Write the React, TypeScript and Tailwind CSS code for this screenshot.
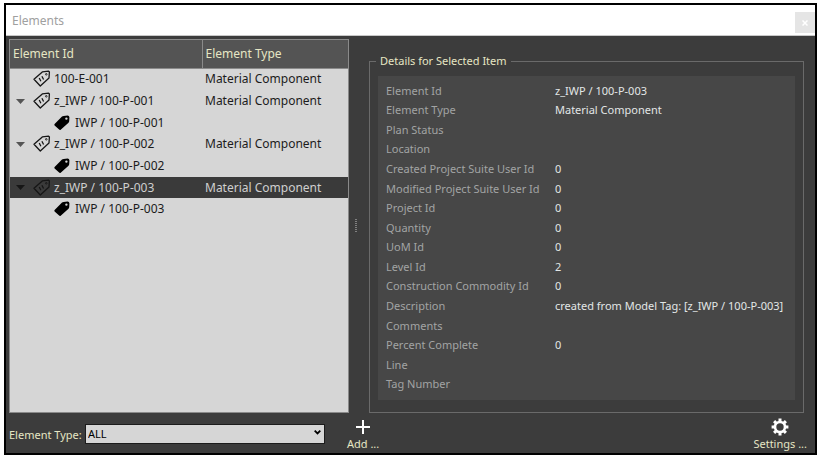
import { useState } from 'react';

type Row = { id: string; type?: string; child?: boolean; expandable?: boolean };

const rows: Row[] = [
  { id: '100-E-001', type: 'Material Component' },
  { id: 'z_IWP / 100-P-001', type: 'Material Component', expandable: true },
  { id: 'IWP / 100-P-001', child: true },
  { id: 'z_IWP / 100-P-002', type: 'Material Component', expandable: true },
  { id: 'IWP / 100-P-002', child: true },
  { id: 'z_IWP / 100-P-003', type: 'Material Component', expandable: true },
  { id: 'IWP / 100-P-003', child: true },
];

const details: [string, string][] = [
  ['Element Id', 'z_IWP / 100-P-003'],
  ['Element Type', 'Material Component'],
  ['Plan Status', ''],
  ['Location', ''],
  ['Created Project Suite User Id', '0'],
  ['Modified Project Suite User Id', '0'],
  ['Project Id', '0'],
  ['Quantity', '0'],
  ['UoM Id', '0'],
  ['Level Id', '2'],
  ['Construction Commodity Id', '0'],
  ['Description', 'created from Model Tag: [z_IWP / 100-P-003]'],
  ['Comments', ''],
  ['Percent Complete', '0'],
  ['Line', ''],
  ['Tag Number', ''],
];

function OutlineTag() {
  return (
    <svg width="18" height="18" viewBox="0 0 18 18" fill="none" stroke="currentColor" aria-hidden="true">
      <path d="M1 9.3 9.3 1.9 15.6 1.2 16.4 2 16 8 7.3 16Z" strokeWidth="1.3" strokeLinejoin="round" />
      <circle cx="13.3" cy="4.300" r=".8" strokeWidth=".9" />
      <path d="m6.200 8 1.700 3.200M8.900 6.300l1.700 3.200" strokeWidth="1.3" />
    </svg>
  );
}

function SolidTag() {
  return (
    <svg width="16" height="16" viewBox="0 0 16 16" aria-hidden="true">
      <path
        d="M.6 9.1 8 1.6Q8.7 1 9.6.9L13.6.6Q15.3.6 15.4 2.2L15.2 6.3Q15.1 7.1 14.5 7.7L6.7 14.7Q5.9 15.4 5.1 14.6L.6 10.5Q0 9.8.6 9.1ZM12.4 2.4a1.2 1.2 0 1 0 0 2.4 1.2 1.2 0 0 0 0-2.4Z"
        fill="currentColor"
        fillRule="evenodd"
      />
    </svg>
  );
}

function Gear() {
  return (
    <svg width="18" height="18" viewBox="0 0 18 18" fill="none" stroke="currentColor" aria-hidden="true">
      <circle cx="9" cy="9" r="5" strokeWidth="2.6" />
      <path
        d="M9 .6v3M9 14.4v3M.6 9h3M14.4 9h3M3.1 3.1l2 2M12.9 12.9l2 2M3.1 14.9l2-2M12.9 5.1l2-2"
        strokeWidth="3"
      />
    </svg>
  );
}

export default function App() {
  const [selected, setSelected] = useState(5);
  return (
    <div className="h-screen bg-white pt-[3px] pr-[5px] pb-[2px] pl-1 font-['Noto_Sans',sans-serif]">
      <main className="flex h-full flex-col border-2 border-black bg-[#3c3c3c]">
        <header className="flex h-[31px] shrink-0 items-center justify-between border-b border-[#c8c8c8] bg-white pt-[2px] pl-[6px]">
          <h1 className="text-[12px] leading-4 text-[#a0a0a0]">Elements</h1>
          <button aria-label="Close" className="mt-[3px] flex h-[21px] w-5 items-center justify-center bg-[#e5e5e5] text-white">
            <svg width="6" height="6" viewBox="0 0 6 6" stroke="currentColor" strokeWidth="1.5" aria-hidden="true">
              <path d="m.5.5 5 5m0-5-5 5" />
            </svg>
          </button>
        </header>

        <div className="flex min-h-0 flex-1 pt-[3px] pr-[11px] pl-[3px]">
          <section className="w-[340px] shrink-0 border border-[#8a8a8a] bg-[#d6d6d6]">
            <table className="h-[180px] w-full table-fixed border-collapse text-left text-[12px] leading-4 text-[#1c1c1c]">
              <thead>
                <tr className="h-7 border-b border-[#8a8a8a] bg-[#545454] text-[#e6e6c4]">
                  <th className="w-[192px] border-r border-[#8a8a8a] p-0 pl-[3px] font-normal">Element Id</th>
                  <th className="p-0 pl-[3px] font-normal">Element Type</th>
                </tr>
              </thead>
              <tbody>
                {rows.map((row, i) => (
                  <tr
                    key={row.id}
                    onClick={() => setSelected(i)}
                    className={i === selected ? 'bg-[#3a3a3a]' : ''}
                  >
                    <td className="p-0">
                      <div className={row.child ? 'flex h-[18px] items-center pl-11' : 'flex h-[18px] items-center pl-[6px]'}>
                        {!row.child && (
                          <span className={i === selected ? 'flex w-[17px] text-[#161616]' : 'flex w-[17px] text-[#555555]'}>
                            {row.expandable && (
                              <svg width="9" height="5" viewBox="0 0 9 5" fill="currentColor" aria-hidden="true">
                                <path d="M0 0h9L4.500 5Z" />
                              </svg>
                            )}
                          </span>
                        )}
                        <span className={row.child ? 'w-[21px] text-black' : 'w-[21px] text-[#161616]'}>
                          {row.child ? <SolidTag /> : <OutlineTag />}
                        </span>
                        <span className={i === selected ? 'text-[#cfcfcf]' : ''}>{row.id}</span>
                      </div>
                    </td>
                    <td className={i === selected ? 'p-0 pl-[3px] text-[#cfcfcf]' : 'p-0 pl-[3px]'}>{row.type}</td>
                  </tr>
                ))}
              </tbody>
            </table>
          </section>

          <div className="flex w-5 shrink-0 items-center justify-center pr-[6px]" role="separator">
            <svg width="2" height="14" viewBox="0 0 2 14" aria-hidden="true">
              <path d="M1 0v14" stroke="#808080" strokeWidth="2" strokeDasharray="1 1" />
            </svg>
          </div>

          <fieldset className="mt-[14px] min-w-0 flex-1 border border-[#6a6a6a] px-2 pb-[11px]">
            <legend className="ml-[-2px] px-1 text-[11px] leading-4 text-[#e6e6c4]">Details for Selected Item</legend>
            <div className="mt-[7px] h-[324px] bg-[#474747] pt-[5px] pl-2">
              <table className="h-[313px] w-full table-fixed border-collapse text-left text-[11px] leading-4">
                <tbody>
                  {details.map(([label, value]) => (
                    <tr key={label}>
                      <th className="w-[169px] p-0 font-normal whitespace-nowrap text-[#a2a4a4]">{label}</th>
                      <td className="p-0 whitespace-nowrap text-[#e2e6e6]">{value}</td>
                    </tr>
                  ))}
                </tbody>
              </table>
            </div>
          </fieldset>
        </div>

        <footer className="flex h-10 shrink-0 items-start pr-2 pl-[3px] text-[11px] leading-4 text-[#e6e6c4]">
          <label htmlFor="element-type" className="mt-[14px] w-[76px] whitespace-nowrap">
            Element Type:
          </label>
          <div className="relative mt-[11px] w-[240px]">
            <select
              id="element-type"
              className="block h-5 w-full appearance-none border border-[#1c1c1c] bg-[#d6d6d6] pl-[2px] text-[11px] leading-4 text-black"
            >
              <option>ALL</option>
            </select>
            <svg className="pointer-events-none absolute top-[6px] right-1" width="7" height="5" viewBox="0 0 7 5" fill="none" stroke="black" strokeWidth="1.8" aria-hidden="true">
              <path d="m.7.7 2.800 2.800L6.300.7" />
            </svg>
          </div>
          <button className="mt-[7px] ml-[22px] flex flex-col items-center gap-[2px]">
            <svg width="14" height="14" viewBox="0 0 14 14" stroke="white" strokeWidth="2" aria-hidden="true">
              <path d="M7 0v14M0 7h14" />
            </svg>
            <span>Add ...</span>
          </button>
          <button className="mt-[5px] ml-auto flex flex-col items-center">
            <span className="text-white">
              <Gear />
            </span>
            <span>Settings ...</span>
          </button>
        </footer>
      </main>
    </div>
  );
}
